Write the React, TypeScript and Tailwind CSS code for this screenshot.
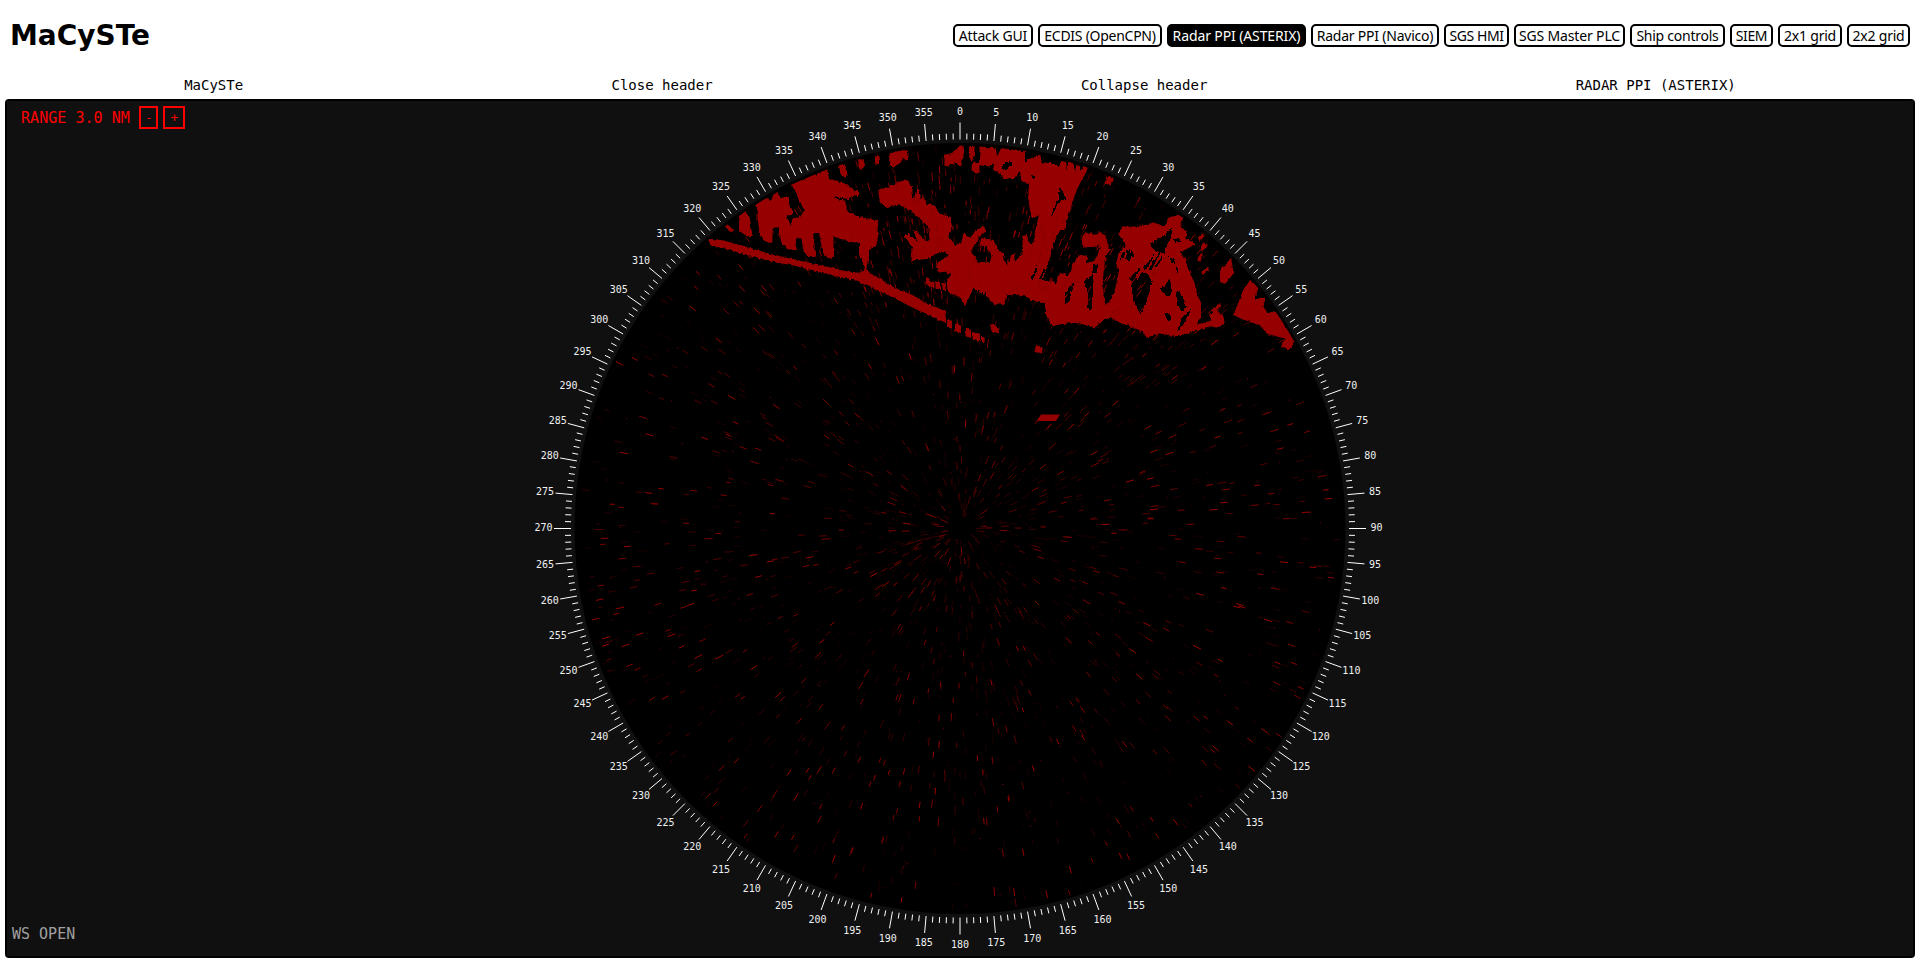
import React from "react";

const CX = 953;
const CY = 427.5;

const tabs = [
  { label: "Attack GUI", cls: "w-[80px] tracking-[-0.15px]" },
  { label: "ECDIS (OpenCPN)", cls: "w-[124px] tracking-[-0.27px]" },
  { label: "Radar PPI (ASTERIX)", cls: "w-[139px] tracking-[-0.12px]", active: true },
  { label: "Radar PPI (Navico)", cls: "w-[128px] tracking-[-0.22px]" },
  { label: "SGS HMI", cls: "w-[65px] tracking-[-0.45px]" },
  { label: "SGS Master PLC", cls: "w-[111px] tracking-[-0.15px]" },
  { label: "Ship controls", cls: "w-[95px] tracking-[-0.25px]" },
  { label: "SIEM", cls: "w-[43px] tracking-[-0.4px]" },
  { label: "2x1 grid", cls: "w-[64px] tracking-[-0.2px]" },
  { label: "2x2 grid", cls: "w-[63px] tracking-[-0.2px]" },
];

/* Echo outlines, in thirds of a pixel, grouped by sector origin. */
const westEchoes = [
  "M55,327 100,332 160,349 250,375 340,395 420,412 470,425 516,430 527,415 537,428 570,447 615,477 620,490 590,485 560,468 530,458 500,451 440,439 380,423 310,406 230,391 160,370 95,353 62,345Z",
  "M148,258 165,245 178,262 182,285 187,320 175,320 148,303Z",
  "M105,288 118,287 130,303 120,305Z",
  "M197,225 230,203 240,215 250,195 265,188 272,205 292,200 300,225 310,250 287,262 302,285 310,265 330,262 345,240 330,220 320,190 305,163 410,120 418,150 430,150 475,165 485,178 508,185 505,200 485,197 475,207 430,198 440,208 465,213 472,248 510,262 562,272 566,310 558,345 537,360 535,400 528,415 518,400 508,375 508,338 480,335 428,318 430,345 432,380 415,383 397,370 395,345 388,308 368,308 373,345 375,380 355,380 342,365 335,325 318,325 315,360 295,357 275,340 268,292 247,292 246,338 230,335 208,315 207,290 203,262 205,245Z",
  "M448,105 460,103 472,130 465,143 452,132Z",
  "M505,90 520,88 523,110 513,120 507,112Z",
  "M555,80 563,75 567,100 558,103Z",
  "M597,90 605,68 650,60 653,90 640,85 612,112 598,105Z",
];

const northEchoes = [
  "M55,180 90,170 120,155 140,150 155,170 160,215 170,180 178,180 182,210 190,200 200,222 225,228 235,250 272,262 275,290 262,320 272,328 285,345 305,340 310,312 330,325 350,300 372,290 378,305 360,315 355,330 340,350 330,365 345,380 355,400 390,400 395,375 380,350 358,345 365,325 400,330 410,355 428,370 430,390 445,405 460,370 465,395 485,375 490,320 500,312 505,335 518,350 525,310 538,255 515,265 505,205 508,165 485,150 480,120 465,145 430,150 422,130 400,120 405,100 380,108 358,105 358,125 350,132 335,120 338,98 358,100 360,50 410,55 408,85 425,55 497,65 495,95 515,85 540,75 545,98 570,100 600,110 607,92 618,98 620,125 630,95 640,105 643,128 652,105 660,110 660,130 670,108 685,115 665,150 650,180 640,205 630,240 612,300 600,300 585,330 570,380 555,430 545,450 590,460 600,430 615,435 625,445 650,400 670,395 670,580 640,575 620,580 580,585 560,555 555,520 520,510 495,498 470,495 440,495 430,525 400,520 385,505 340,475 315,525 300,500 270,490 262,480 262,455 275,430 232,422 230,400 255,385 270,370 240,365 205,385 155,392 150,375 160,355 135,320 145,310 175,340 160,300 175,310 195,335 210,330 205,290 180,265 150,240 120,225 80,232 60,215Z",
  "M253,75 275,70 300,48 312,50 310,80 303,108 285,100 255,108Z",
  "M328,50 343,48 343,70 335,95 328,80Z",
  "M198,443 210,445 212,470 200,465Z M213,455 222,457 224,475 213,473Z M227,455 240,457 240,480 228,475Z M245,458 255,460 257,482 246,478Z",
  "M0,422 20,432 60,452 110,477 160,497 200,522 255,543 258,578 225,563 180,543 130,518 60,483 20,463 0,460Z",
  "M262,570 275,573 275,595 262,592Z M285,582 303,587 303,608 286,603Z M316,597 333,600 333,623 317,618Z M337,607 360,612 358,635 338,628Z M364,615 374,625 372,640 364,632Z",
  "M390,580 410,588 413,608 397,605Z",
];

const northGaps = [
  "M430,100 445,94 458,98 455,108 445,108 440,120 424,118Z",
  "M515,135 525,140 522,150 512,142Z",
  "M600,170 608,185 620,208 600,212 588,235 576,262 580,240 597,205Z",
  "M513,445 530,408 532,414 518,452Z",
  "M538,446 552,418 554,424 543,450Z",
  "M343,478 348,480 345,500 341,500Z M355,480 360,482 358,500 354,498Z M365,482 369,484 367,500 363,500Z M374,484 378,486 377,502 373,500Z",
  "M498,65 506,70 500,98 494,95Z",
  "M625,480 636,485 632,520 614,512 612,495Z",
  "M640,425 648,415 632,460 620,470Z",
];

const eastEchoes = [
  "M0,450 40,455 80,462 85,435 105,430 110,450 130,400 150,375 175,378 165,400 190,395 205,375 210,345 190,350 160,352 158,330 165,308 200,315 210,308 230,320 232,350 240,360 225,380 220,430 215,470 225,525 240,515 255,480 262,450 268,420 258,400 270,365 290,350 275,325 265,310 280,290 330,290 370,278 405,290 415,265 445,255 460,265 450,290 470,310 468,328 490,335 495,345 450,365 465,390 480,430 495,465 500,490 513,520 513,560 500,585 545,572 540,555 560,540 580,560 583,582 560,592 540,588 500,602 470,610 440,618 390,610 350,622 335,602 290,585 240,562 220,570 195,592 150,580 110,575 70,588 50,560 45,520 0,508Z",
  "M603,385 610,430 585,462 568,455 572,420Z",
  "M230,138 243,137 250,150 241,167 225,160Z",
  "M513,345 525,335 533,345 515,365Z M505,380 518,372 515,390 503,392Z M515,425 535,410 535,420 518,435Z M505,325 520,310 520,320 508,335Z M545,540 570,520 572,530 550,548Z",
  "M610,555 625,520 640,480 660,453 685,470 675,510 705,500 700,530 712,550 735,545 760,570 765,595 775,590 798,630 780,657 755,650 765,625 710,610 690,585 640,568Z",
  "M20,646 38,653 34,672 14,665Z",
];

const eastGaps = [
  "M425,292 425,310 412,345 400,370 375,362 358,345 372,332 400,320Z",
  "M300,440 312,430 322,450 335,425 350,428 368,455 345,530 330,552 310,510Z",
  "M105,522 104,495 118,470 130,455 124,490 118,515Z",
  "M165,450 178,445 190,430 190,470 184,545 168,530 175,500Z",
  "M190,402 205,400 200,430 188,428Z",
  "M272,370 285,365 280,385 270,390Z M288,362 300,355 300,372 305,360 312,375 300,395 285,385Z",
  "M390,480 405,462 420,450 425,480 418,500 405,492Z",
  "M440,480 456,495 470,530 455,545 440,520Z",
  "M480,538 465,575 448,598 442,600 455,565Z",
  "M410,548 425,560 420,575 406,560Z",
  "M418,378 430,388 436,402 424,398Z M436,405 446,420 442,432Z",
  "M430,328 445,325 452,335 436,338Z",
  "M340,412 372,372 376,374 346,422Z M356,418 388,366 392,368 364,420Z M374,410 396,380 398,386 378,414Z",
  "M300,445 330,412 333,416 305,452Z",
];

function makeRandom(seed: number) {
  let s = seed;
  return () => {
    s = (s * 1664525 + 1013904223) >>> 0;
    return s / 4294967296;
  };
}

function radial(a: number, r: number, len: number) {
  const s = Math.sin(a);
  const c = -Math.cos(a);
  return `M${(CX + s * r).toFixed(1)},${(CY + c * r).toFixed(1)}L${(CX + s * (r + len)).toFixed(1)},${(CY + c * (r + len)).toFixed(1)}`;
}

function buildClutter() {
  const rnd = makeRandom(20931);
  const buckets: string[] = ["", "", "", "", ""];
  for (let i = 0; i < 2500; i++) {
    const a = rnd() * Math.PI * 2;
    const r = 10 + Math.pow(rnd(), 0.85) * 368;
    const len = rnd() < 0.25 ? 1 : 5 + rnd() * 4;
    const level = Math.min(4, Math.floor(Math.pow(rnd(), 1.7) * (3.6 + r / 170)));
    buckets[level] += radial(a, r, len);
  }
  return buckets;
}

function buildSectorStreaks(seed: number, count: number, from: number, to: number, near: number, far: number) {
  const rnd = makeRandom(seed);
  let d = "";
  for (let i = 0; i < count; i++) {
    const a = ((from + rnd() * (to - from)) * Math.PI) / 180;
    d += radial(a, near + rnd() * (far - near), 3 + rnd() * 6);
  }
  return d;
}

const clutter = buildClutter();
const faintStreaks = buildSectorStreaks(771, 260, -28, 56, 215, 365);
const brightStreaks = buildSectorStreaks(95, 90, 10, 42, 235, 330) + buildSectorStreaks(41, 70, -22, 6, 230, 350);
const clutterColors = ["#1c0000", "#360000", "#560000", "#780000", "#960000"];

function Bearings() {
  return (
    <g>
      {Array.from({ length: 72 }, (_, i) => i * 5).map((deg) => {
        const a = (deg * Math.PI) / 180;
        return (
          <text
            key={deg}
            x={CX + Math.sin(a) * 416.5}
            y={CY - Math.cos(a) * 416.5 + 2.9}
            textAnchor="middle"
            fill="#f0f0f0"
            className="font-['DejaVu_Sans_Mono',monospace] text-[10px]"
          >
            {deg}
          </text>
        );
      })}
      {Array.from({ length: 360 }, (_, deg) => {
        const a = (deg * Math.PI) / 180;
        const outer = deg % 5 === 0 ? 406 : 395;
        return (
          <line
            key={deg}
            x1={CX + Math.sin(a) * 389}
            y1={CY - Math.cos(a) * 389}
            x2={CX + Math.sin(a) * outer}
            y2={CY - Math.cos(a) * outer}
            stroke="#ffffff"
            strokeWidth={1}
          />
        );
      })}
    </g>
  );
}

function Echoes({ shapes, gaps = [], transform }: { shapes: string[]; gaps?: string[]; transform: string }) {
  return (
    <g transform={transform}>
      {shapes.map((d) => (
        <path key={d} d={d} fill="#960000" stroke="#960000" strokeWidth={1.5} />
      ))}
      {gaps.map((d) => (
        <path key={d} d={d} fill="#000000" />
      ))}
    </g>
  );
}

function Scope() {
  return (
    <svg className="block h-full w-full" viewBox="0 0 1906 855">
      <defs>
        <clipPath id="disc">
          <circle cx={CX} cy={CY} r={383} />
        </clipPath>
        <filter id="rough" x="0" y="0" width="1906" height="855" filterUnits="userSpaceOnUse" colorInterpolationFilters="sRGB">
          <feTurbulence type="fractalNoise" baseFrequency="0.35 0.12" numOctaves={2} seed={4} result="n" />
          <feDisplacementMap in="SourceGraphic" in2="n" scale={3.5} xChannelSelector="R" yChannelSelector="G" />
        </filter>
      </defs>
      <circle cx={CX} cy={CY} r={385.5} fill="#000000" />
      <g clipPath="url(#disc)">
        {clutter.map((d, i) => (
          <path key={i} d={d} stroke={clutterColors[i]} strokeWidth={1} fill="none" />
        ))}
        <path d={faintStreaks} stroke="#480000" strokeWidth={1} fill="none" />
        <g filter="url(#rough)" shapeRendering="crispEdges">
          <Echoes shapes={westEchoes} transform="translate(683 29) scale(0.33333)" />
          <Echoes shapes={northEchoes} gaps={northGaps} transform="translate(853 29) scale(0.33333)" />
          <Echoes shapes={eastEchoes} gaps={eastGaps} transform="translate(1023 29) scale(0.33333)" />
        </g>
        <path d={brightStreaks} stroke="#8a0000" strokeWidth={1} fill="none" />
        <path d="M1034,313.500 1053,313.500 1049,320 1030.300,320Z" fill="#960000" />
      </g>
      <Bearings />
    </svg>
  );
}

export default function App() {
  return (
    <div className="flex h-[963px] w-[1920px] flex-col overflow-hidden bg-white text-black">
      <header className="flex h-[71px] items-center justify-between px-[10px]">
        <h1 className="font-['DejaVu_Sans',sans-serif] text-[28px] leading-none font-bold">MaCySTe</h1>
        <nav className="flex gap-[5px]">
          {tabs.map((t) => (
            <button
              key={t.label}
              className={`flex h-[23px] items-center justify-center rounded-[5px] border-2 border-black font-['Noto_Sans',sans-serif] text-[14px] leading-none whitespace-nowrap ${t.cls} ${t.active ? "bg-black text-white" : "bg-white text-black"}`}
            >
              {t.label}
            </button>
          ))}
        </nav>
      </header>
      <div className="flex h-[28px] items-center justify-around font-['DejaVu_Sans_Mono',monospace] text-[14px] leading-none">
        <span>MaCySTe</span>
        <span>Close header</span>
        <span>Collapse header</span>
        <span>RADAR PPI (ASTERIX)</span>
      </div>
      <main className="relative mx-[5px] h-[859px] rounded-[4px] border-2 border-black bg-[#101010] font-['DejaVu_Sans_Mono',monospace]">
        <Scope />
        <div className="absolute top-[5px] left-[14px] flex items-center text-[15px] leading-none text-[#ff0000]">
          <span className="pt-[2px] tracking-[0.04px]">RANGE 3.0 NM</span>
          <button className="ml-[9.500px] flex h-[23px] w-[19px] items-center justify-center border-2 border-[#ff0000] text-[13px]">-</button>
          <button className="ml-[5px] flex h-[23px] w-[22px] items-center justify-center border-2 border-[#ff0000] text-[13px]">+</button>
        </div>
        <div className="absolute bottom-[14px] left-[5px] text-[15px] leading-none text-[#a0a0a0]">WS OPEN</div>
      </main>
    </div>
  );
}
